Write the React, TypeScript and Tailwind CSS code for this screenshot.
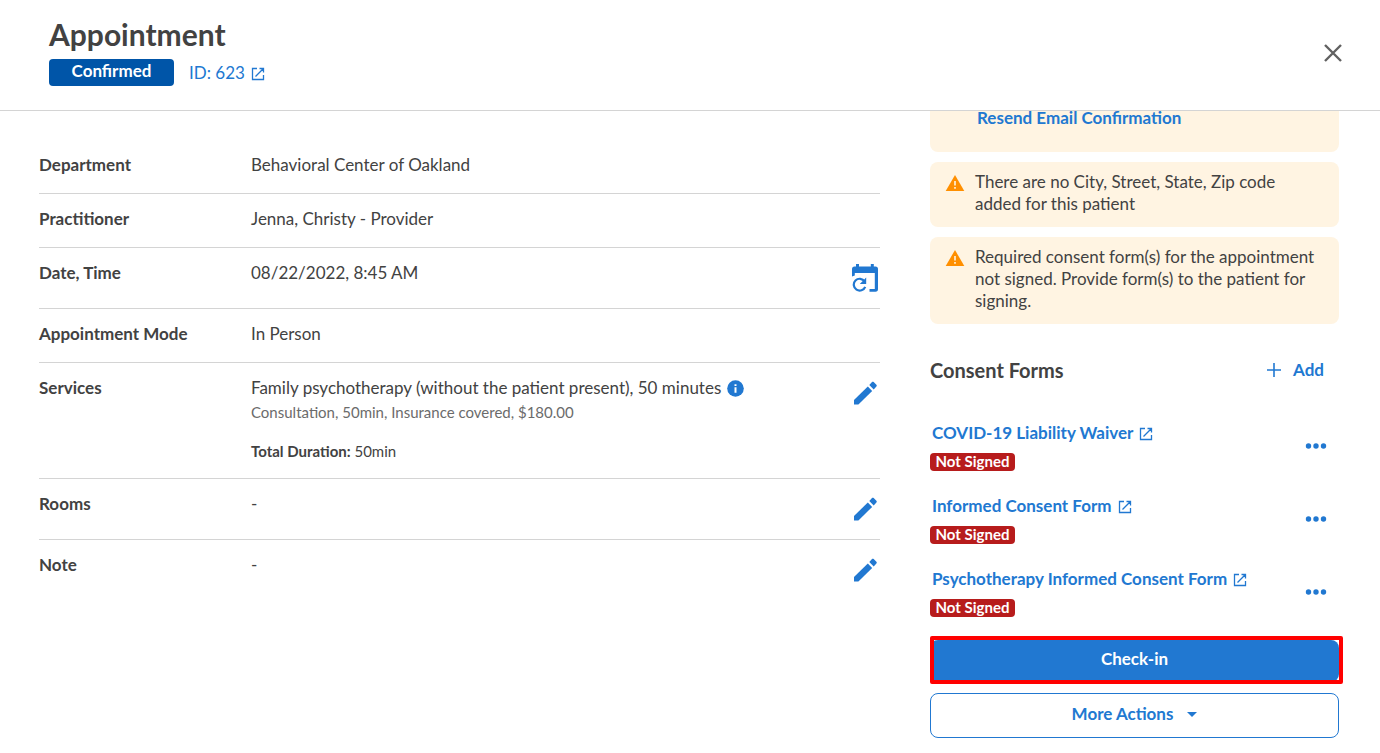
import type { ReactNode } from 'react';

const consentForms = [
  { id: 'covid', name: 'COVID-19 Liability Waiver' },
  { id: 'informed', name: 'Informed Consent Form' },
  { id: 'psychotherapy', name: 'Psychotherapy Informed Consent Form' },
];

function OpenIcon() {
  return (
    <svg width="14" height="14" viewBox="0 0 14 14" className="mt-[2px]" fill="none" stroke="currentColor" aria-hidden="true">
      <path d="M6 1.5H1.5V12.5H12.5V8M8.5 1.5H12.5V5.5M12.2 1.8L4.5 9.5" strokeWidth="1.3" />
    </svg>
  );
}

function PencilIcon() {
  return (
    <svg width="28" height="28" viewBox="0 0 28 28" fill="currentColor" aria-hidden="true">
      <path d="M2 21V25.4H6.4L20.2 11.9L15.8 7.5Z" />
      <path d="M24.4 7.4C24.9 6.9 24.9 6.2 24.4 5.7L21.7 3C21.2 2.5 20.5 2.5 20 3L17.3 6L21.7 10.4Z" />
    </svg>
  );
}

function RescheduleIcon() {
  return (
    <svg width="28" height="28" viewBox="0 0 28 28" fill="none" aria-hidden="true">
      <path
        d="M0 12.5V5Q0 2.5 2.5 2.5H4V0H7V2.5H18.8V0H21.8V2.5H23.5Q26 2.5 26 5V25Q26 27.8 23.5 27.8H17.5V25H22.8V9H2.8V11.5Z"
        fill="currentColor"
      />
      <path d="M12.6 17.4A5.9 5.9 0 1 0 13.2 22.8" stroke="currentColor" strokeWidth="2.2" />
      <path d="M14.2 13.6V20H7.8Z" fill="currentColor" />
    </svg>
  );
}

function WarningIcon() {
  return (
    <svg width="20" height="18" viewBox="0 0 20 18" className="shrink-0" aria-hidden="true">
      <path d="M10 1L19.3 17H0.7Z" fill="#ff8f00" />
      <path d="M9.2 7H10.8V11.5H9.2ZM9.2 13H10.8V14.7H9.2Z" fill="#fff4e2" />
    </svg>
  );
}

function DetailRow({ label, action, children }: { label: string; action?: ReactNode; children: ReactNode }) {
  return (
    <div className="flex items-start border-b border-[#d4d4d4] last:border-b-0">
      <dt className="w-[212px] shrink-0 pt-[13px] pb-4 font-bold">{label}</dt>
      <dd className="flex min-w-0 flex-1 items-start justify-between">
        <div className="pt-[13px] pb-4">{children}</div>
        {action}
      </dd>
    </div>
  );
}

function ActionButton({ label, children }: { label: string; children: ReactNode }) {
  return (
    <button type="button" aria-label={label} className="my-4 shrink-0 cursor-pointer text-[#2178d1]">
      {children}
    </button>
  );
}

function Alert({ children }: { children: ReactNode }) {
  return (
    <div className="flex gap-[10px] rounded-lg bg-[#fff4e2] pt-[9px] pr-4 pb-3 pl-[15px]">
      <div className="pt-[3px]">
        <WarningIcon />
      </div>
      <p className="leading-[22px]">{children}</p>
    </div>
  );
}

export default function App() {
  return (
    <div className="flex min-h-screen flex-col bg-white font-[Lato,sans-serif] text-[17px] leading-6 text-[#424242]">
      <header className="flex items-start justify-between border-b border-[#d4d4d4] pt-4 pr-9 pb-6 pl-[49px]">
        <div>
          <h1 className="text-[30px] leading-9 font-bold">Appointment</h1>
          <div className="mt-[7px] flex items-center gap-[15px]">
            <span className="flex h-[27px] w-[125px] items-center justify-center rounded bg-[#0055a8] pb-[3px] font-bold text-white">
              Confirmed
            </span>
            <a href="#appointment" className="flex items-center gap-[6px] text-[#2178d1]">
              ID: 623
              <OpenIcon />
            </a>
          </div>
        </div>
        <button type="button" aria-label="Close" className="mt-[27px] cursor-pointer text-[#616161]">
          <svg width="22" height="20" viewBox="0 0 22 20" fill="none" stroke="currentColor" aria-hidden="true">
            <path d="M3 2L19 18M19 2L3 18" strokeWidth="2.4" />
          </svg>
        </button>
      </header>

      <main className="flex gap-[50px] pr-[41px] pl-[39px]">
        <dl className="min-w-0 flex-1 pt-[29px]">
          <DetailRow label="Department">Behavioral Center of Oakland</DetailRow>
          <DetailRow label="Practitioner">Jenna, Christy - Provider</DetailRow>
          <DetailRow
            label="Date, Time"
            action={
              <ActionButton label="Reschedule">
                <RescheduleIcon />
              </ActionButton>
            }
          >
            08/22/2022, 8:45 AM
          </DetailRow>
          <DetailRow label="Appointment Mode">In Person</DetailRow>
          <DetailRow
            label="Services"
            action={
              <ActionButton label="Edit services">
                <PencilIcon />
              </ActionButton>
            }
          >
            <div className="flex items-center gap-[6px]">
              Family psychotherapy (without the patient present), 50 minutes
              <svg width="17" height="17" viewBox="0 0 17 17" className="shrink-0" aria-hidden="true">
                <circle cx="8.5" cy="8.5" r="8.3" fill="#2178d1" />
                <path d="M7.5 4.2H9.5V6.1H7.5ZM7.5 7.2H9.5V12.8H7.5Z" fill="white" />
              </svg>
            </div>
            <div className="text-[15px] leading-6 text-[#6b6b6b]">Consultation, 50min, Insurance covered, $180.00</div>
            <div className="mt-4 text-[15px] leading-[22px]">
              <b>Total Duration:</b> 50min
            </div>
          </DetailRow>
          <DetailRow
            label="Rooms"
            action={
              <ActionButton label="Edit rooms">
                <PencilIcon />
              </ActionButton>
            }
          >
            -
          </DetailRow>
          <DetailRow
            label="Note"
            action={
              <ActionButton label="Edit note">
                <PencilIcon />
              </ActionButton>
            }
          >
            -
          </DetailRow>
        </dl>

        <aside className="w-[409px] shrink-0">
          <div className="space-y-[10px]">
            <div className="h-[41px] rounded-b-lg bg-[#fff4e2] pl-[47px]">
              <button type="button" className="block cursor-pointer leading-[14px] font-bold text-[#2178d1]">
                Resend Email Confirmation
              </button>
            </div>
            <Alert>There are no City, Street, State, Zip code added for this patient</Alert>
            <Alert>
              Required consent form(s) for the appointment not signed. Provide form(s) to the patient for signing.
            </Alert>
          </div>

          <div className="mt-[34px] flex items-center justify-between pr-[15px]">
            <h2 className="text-xl leading-6 font-bold">Consent Forms</h2>
            <button type="button" className="flex cursor-pointer items-center gap-3 font-bold text-[#2178d1]">
              <svg width="14" height="14" viewBox="0 0 14 14" stroke="currentColor" aria-hidden="true">
                <path d="M7 0V14M0 7H14" strokeWidth="1.6" />
              </svg>
              Add
            </button>
          </div>

          <ul className="mt-[39px] space-y-[23px]">
            {consentForms.map((form) => (
              <li key={form.id} className="flex items-center justify-between pr-3">
                <div>
                  <a href={`#${form.id}`} className="flex items-center gap-[6px] pl-[2px] font-bold text-[#2178d1]">
                    {form.name}
                    <OpenIcon />
                  </a>
                  <span className="mt-2 flex h-[18px] w-[85px] items-center justify-center rounded bg-[#b71c1c] pb-[2px] text-[15px] leading-4 font-bold text-white">
                    Not Signed
                  </span>
                </div>
                <button type="button" aria-label={`Actions for ${form.name}`} className="cursor-pointer text-[#2178d1]">
                  <svg width="22" height="6" viewBox="0 0 22 6" fill="currentColor" aria-hidden="true">
                    <circle cx="3.5" cy="3" r="2.7" />
                    <circle cx="11" cy="3" r="2.7" />
                    <circle cx="18.5" cy="3" r="2.7" />
                  </svg>
                </button>
              </li>
            ))}
          </ul>

          <div className="relative mt-[23px]">
            <button
              type="button"
              className="block h-[42px] w-full cursor-pointer rounded-lg bg-[#2178d1] pb-1 font-bold text-white"
            >
              Check-in
            </button>
            <div className="pointer-events-none absolute -top-1 -right-1 -bottom-[2px] left-0 rounded-xs border-4 border-[#ff0000]" />
          </div>
          <button
            type="button"
            className="mt-[11px] flex h-[45px] w-full cursor-pointer items-center justify-center gap-[14px] rounded-lg border border-[#2178d1] pb-[3px] font-bold text-[#2178d1]"
          >
            More Actions
            <svg width="10" height="5" viewBox="0 0 10 5" fill="currentColor" aria-hidden="true">
              <path d="M0 0H10L5 5Z" />
            </svg>
          </button>
        </aside>
      </main>
    </div>
  );
}
